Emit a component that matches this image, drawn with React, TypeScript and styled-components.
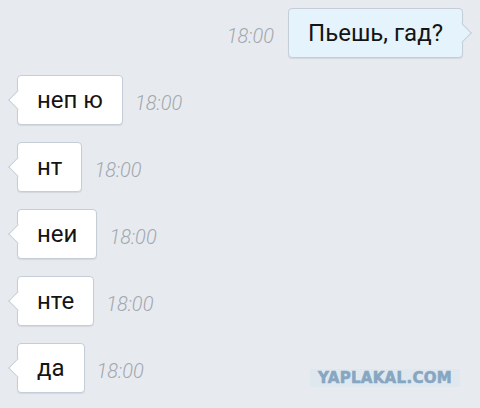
import React from "react";
import styled, { createGlobalStyle, css } from "styled-components";

const Global = createGlobalStyle`
  html, body { margin: 0; padding: 0; }
  body {
    background: #e7ebef;
    font-family: Roboto, "Noto Sans", sans-serif;
    width: 480px;
    height: 408px;
    overflow: hidden;
  }
`;

const Screen = styled.div`
  position: relative;
  width: 480px;
  height: 408px;
  box-sizing: border-box;
  padding: 8px 17px 0 17px;
  display: flex;
  flex-direction: column;
  gap: 17px;
  background: #e7ebef;
`;

const Row = styled.div<{ $out?: boolean }>`
  display: flex;
  align-items: center;
  justify-content: ${(p) => (p.$out ? "flex-end" : "flex-start")};
  gap: ${(p) => (p.$out ? "14px" : "12px")};
`;

const Bubble = styled.div<{ $out?: boolean }>`
  position: relative;
  height: 50px;
  box-sizing: border-box;
  padding: 0 19px;
  display: flex;
  align-items: center;
  font-size: 24px;
  color: #141414;
  border-radius: 4px;
  border: 1px solid #c5ced7;
  box-shadow: 0 1px 1px rgba(0, 0, 0, 0.08);
  background: ${(p) => (p.$out ? "#e5f3fd" : "#ffffff")};

  &::before {
    content: "";
    position: absolute;
    top: calc(50% - 7px);
    width: 13px;
    height: 13px;
    background: inherit;
    transform: rotate(45deg);
    ${(p) =>
      p.$out
        ? css`
            right: -7px;
            border-top: 1px solid #c5ced7;
            border-right: 1px solid #c5ced7;
          `
        : css`
            left: -7px;
            border-left: 1px solid #c5ced7;
            border-bottom: 1px solid #c5ced7;
          `}
  }
`;

const Time = styled.span`
  padding-top: 6px;
  font-size: 20px;
  font-style: italic;
  font-weight: 300;
  color: #a2a7ae;
`;

const Watermark = styled.div`
  position: absolute;
  left: 310px;
  top: 369px;
  width: 150px;
  height: 18px;
  background: #e0e8ef;
  display: flex;
  align-items: center;
  justify-content: center;
  font-family: "DejaVu Sans", sans-serif;
  font-weight: 700;
  font-size: 15px;
  letter-spacing: 0.3px;
  color: #86a6c2;
  -webkit-text-stroke: 0.6px #86a6c2;
`;

const incoming = ["неп ю", "нт", "неи", "нте", "да"];

export default function App() {
  return (
    <>
      <Global />
      <Screen>
        <Row $out>
          <Time>18:00</Time>
          <Bubble $out>Пьешь, гад?</Bubble>
        </Row>
        {incoming.map((t, i) => (
          <Row key={i}>
            <Bubble>{t}</Bubble>
            <Time>18:00</Time>
          </Row>
        ))}
        <Watermark>YAPLAKAL.COM</Watermark>
      </Screen>
    </>
  );
}
